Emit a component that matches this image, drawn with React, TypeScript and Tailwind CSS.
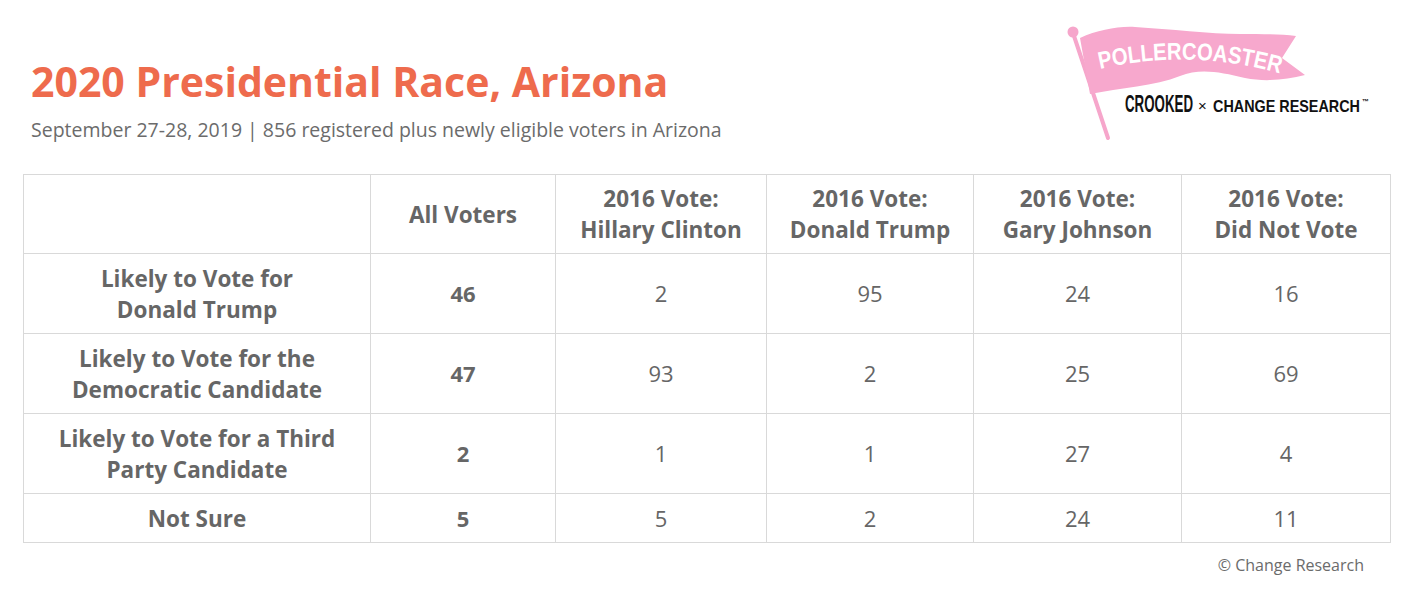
const FONT = "font-['Open_Sans','Lato',sans-serif]"

const COLUMNS = [
  ["All Voters"],
  ["2016 Vote:", "Hillary Clinton"],
  ["2016 Vote:", "Donald Trump"],
  ["2016 Vote:", "Gary Johnson"],
  ["2016 Vote:", "Did Not Vote"],
]

const ROWS: { label: string[]; values: number[]; tall: boolean }[] = [
  { label: ["Likely to Vote for", "Donald Trump"], values: [46, 2, 95, 24, 16], tall: true },
  { label: ["Likely to Vote for the", "Democratic Candidate"], values: [47, 93, 2, 25, 69], tall: true },
  { label: ["Likely to Vote for a Third", "Party Candidate"], values: [2, 1, 1, 27, 4], tall: true },
  { label: ["Not Sure"], values: [5, 5, 2, 24, 11], tall: false },
]

const WIDTHS = ["w-[347px]", "w-[185px]", "w-[211px]", "w-[207px]", "w-[208px]", "w-[209px]"]

function Logo() {
  return (
    <svg width="310" height="125" viewBox="0 0 310 125">
      {/* pole */}
      <line x1="13" y1="13" x2="48" y2="118" stroke="#f6a6cb" strokeWidth="4" strokeLinecap="round" />
      <circle cx="13" cy="12" r="5.5" fill="#f6a6cb" />
      {/* flag */}
      <path
        d="M20 18 C38 10 58 6 75 7 C110 9 150 14 180 14 C200 14 220 14 236 16 L222 38 L245 55 C225 60 205 62 185 58 C160 52 140 48 120 56 C95 66 60 68 30 74 Z"
        fill="#f7a8cd"
      />
      <path id="flag-curve" d="M40 49 Q130 28 222 54" fill="none" />
      <text fill="#ffffff" fontFamily="'Liberation Sans', sans-serif" fontWeight="700" fontSize="24">
        <textPath href="#flag-curve" textLength="182" lengthAdjust="spacingAndGlyphs">
          POLLERCOASTER
        </textPath>
      </text>
      <text
        x="65"
        y="92"
        fill="#111111"
        fontFamily="'Liberation Sans', sans-serif"
        fontWeight="700"
        fontSize="23"
        textLength="68"
        lengthAdjust="spacingAndGlyphs"
      >
        CROOKED
      </text>
      <text x="138" y="91" fill="#111111" fontFamily="'Liberation Sans', sans-serif" fontSize="15">
        ×
      </text>
      <text
        x="153"
        y="92"
        fill="#111111"
        fontFamily="'Liberation Sans', sans-serif"
        fontWeight="700"
        fontSize="16.5"
        textLength="147"
        lengthAdjust="spacingAndGlyphs"
      >
        CHANGE RESEARCH
      </text>
      <text x="302" y="84" fill="#111111" fontFamily="'Liberation Sans', sans-serif" fontWeight="700" fontSize="7">
        ™
      </text>
    </svg>
  )
}

export default function App() {
  return (
    <div className={`h-[595px] w-[1424px] bg-white text-[#666666] ${FONT}`}>
      <div className="flex items-start justify-between">
        <div className="pl-[31px] pt-[56px]">
          <h1 className="text-[41px] font-bold leading-[50px] text-[#ee6b4d]">
            2020 Presidential Race, Arizona
          </h1>
          <p className="mt-[13px] text-[19.5px] leading-[22px] text-[#6b6b6b]">
            September 27-28, 2019 | 856 registered plus newly eligible voters in Arizona
          </p>
        </div>
        <div className="mr-[54px] mt-[20px] h-[125px]">
          <Logo />
        </div>
      </div>

      <table className="ml-[23px] mt-[29px] table-fixed border-collapse text-center">
        <thead>
          <tr className="h-[79px]">
            <th className={`${WIDTHS[0]} border border-[#d9d9d9]`} />
            {COLUMNS.map((col, i) => (
              <th
                key={i}
                className={`${WIDTHS[i + 1]} border border-[#d9d9d9] text-[22.5px] font-bold leading-[31px]`}
              >
                {col.map((line) => (
                  <div key={line}>{line}</div>
                ))}
              </th>
            ))}
          </tr>
        </thead>
        <tbody>
          {ROWS.map((row) => (
            <tr key={row.label.join(" ")} className={row.tall ? "h-[80px]" : "h-[49px]"}>
              <td className="border border-[#d9d9d9] text-[22.5px] font-bold leading-[31px]">
                {row.label.map((line) => (
                  <div key={line}>{line}</div>
                ))}
              </td>
              {row.values.map((v, i) => (
                <td
                  key={i}
                  className={`border border-[#d9d9d9] text-[22px] leading-[31px] ${i === 0 ? "font-bold" : "font-normal"}`}
                >
                  {v}
                </td>
              ))}
            </tr>
          ))}
        </tbody>
      </table>

      <p className="mr-[60px] mt-[10px] text-right text-[16px] text-[#6b6b6b]">© Change Research</p>
    </div>
  )
}
